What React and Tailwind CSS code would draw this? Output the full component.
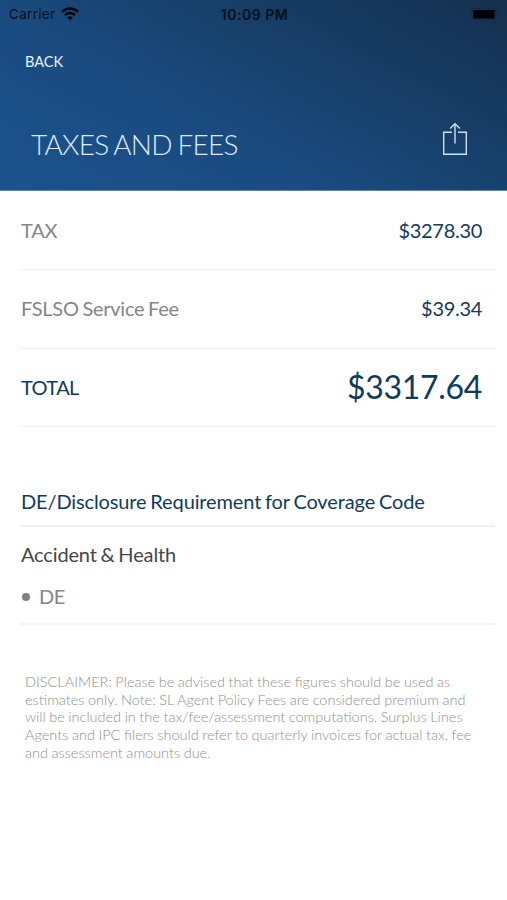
import React from "react";

const fees = [
  { id: "tax", label: "TAX", amount: 3278.3 },
  { id: "service", label: "FSLSO Service Fee", amount: 39.34 },
];

const disclosures = [{ id: 1, title: "Accident & Health", codes: ["DE"] }];

const disclaimer = [
  "DISCLAIMER: Please be advised that these figures should be used as",
  "estimates only. Note: SL Agent Policy Fees are considered premium and",
  "will be included in the tax/fee/assessment computations. Surplus Lines",
  "Agents and IPC filers should refer to quarterly invoices for actual tax, fee",
  "and assessment amounts due.",
];

function StatusBar() {
  return (
    <div className="grid h-[27px] grid-cols-3 items-center pl-[9px] pr-[7px] font-['Inter','Liberation_Sans',sans-serif] text-[#06101c]">
      <div className="flex items-center gap-[6px]">
        <span className="mt-[1px] text-[13.5px] tracking-[0.3px]">Carrier</span>
        <svg width="18" height="14" viewBox="0 0 18 14" fill="none" stroke="#020509" strokeWidth="2.5">
          <path d="M1 4.9a11.4 11.4 0 0 1 16 0" />
          <path d="M4 8.1a7.1 7.1 0 0 1 10 0" />
          <path d="M9 13.6 6.1 10.6a4.2 4.2 0 0 1 5.8 0z" fill="#020509" stroke="none" />
        </svg>
      </div>
      <span className="mt-[1px] text-center text-[14px] font-semibold tracking-[0.5px] whitespace-nowrap">
        10:09 PM
      </span>
      <svg className="justify-self-end" width="30" height="14" viewBox="0 0 30 14">
        <rect x="1.5" y="1.5" width="24" height="11" rx="3" fill="none" stroke="#0f2a4a" />
        <rect x="3" y="3" width="21.5" height="8.5" rx="1.5" fill="#000" />
        <path d="M27 5v4c1-.3 1.5-1 1.5-2S28 5.3 27 5z" fill="#0f2a4a" />
      </svg>
    </div>
  );
}

function ShareIcon() {
  return (
    <svg width="26" height="34" viewBox="0 0 26 34" fill="none" stroke="#cfe0f2" strokeWidth="1.4">
      <path d="M10 10.2H1.7V32.3H24.3V10.2H16" />
      <path d="M13 21.5V2" />
      <path d="M8.2 6.6 13 1.8 17.8 6.6" />
    </svg>
  );
}

function FeeRow({ label, amount }) {
  return (
    <li className="flex h-[78.3px] items-center justify-between border-b-[1.5px] border-[#efefef] pr-[13px] pb-[2px] pl-px">
      <span className="tracking-[-0.25px] text-[#868686] [word-spacing:-1.2px]">{label}</span>
      <span className="tracking-[-0.3px] text-[#113b5c]">${amount.toFixed(2)}</span>
    </li>
  );
}

function App() {
  const total = fees.reduce((sum, fee) => sum + fee.amount, 0);

  return (
    <div className="min-h-[900px] w-full bg-white font-['Lato',sans-serif] text-[20px]">
      <header className="h-[191px] border-b border-[#5f86b0] bg-[linear-gradient(28deg,#1b528d_0%,#1a4b80_38%,#173f69_65%,#15304f_100%)]">
        <StatusBar />
        <button className="mt-[24px] ml-[25px] block text-[14.5px] leading-[22px] text-[#e9f2fb]">
          BACK
        </button>
        <div className="mt-[49px] flex items-start justify-between pr-[39.5px] pl-[31px]">
          <h1 className="mt-[4px] text-[28px] leading-[36px] font-light tracking-[-0.75px] text-[#dbe9f8] [word-spacing:-1.2px]">
            TAXES AND FEES
          </h1>
          <button aria-label="Share">
            <ShareIcon />
          </button>
        </div>
      </header>

      <main className="pt-px pr-[12px] pl-[20px]">
        <ul>
          {fees.map((fee) => (
            <FeeRow key={fee.id} label={fee.label} amount={fee.amount} />
          ))}
          <li className="flex h-[78.3px] items-center justify-between border-b-[1.5px] border-[#efefef] pr-[13px] pl-px text-[#113b5c]">
            <span className="tracking-[-0.6px]">TOTAL</span>
            <span className="text-[32px] tracking-[-0.3px]">${total.toFixed(2)}</span>
          </li>
        </ul>

        <h2 className="mt-[60px] flex h-[40px] items-center border-b-2 border-[#f1f1f1] pb-[10px] pl-px tracking-[-0.12px] text-[#113b5c] [word-spacing:-1.2px]">
          DE/Disclosure Requirement for Coverage Code
        </h2>
        {disclosures.map((item) => (
          <section key={item.id} className="h-[98px] border-b-2 border-[#f3f3f3] pt-[13px]">
            <h3 className="pl-px leading-[28px] tracking-[-0.15px] text-[#464646] [word-spacing:-1.2px]">
              {item.title}
            </h3>
            <ul className="mt-[14px]">
              {item.codes.map((code) => (
                <li key={code} className="flex items-center gap-[9px] leading-[28px] tracking-[-0.4px] text-[#868686]">
                  <span className="mt-[2px] ml-[2px] size-[8px] rounded-full bg-[#808080]" />
                  {code}
                </li>
              ))}
            </ul>
          </section>
        ))}

        <p className="mt-[48px] ml-[5px] text-[14.5px] leading-[17.7px] font-light whitespace-nowrap text-[#909090] [word-spacing:-0.4px]">
          {disclaimer.map((line) => (
            <span key={line} className="block">
              {line}
            </span>
          ))}
        </p>
      </main>
    </div>
  );
}

export default App;
